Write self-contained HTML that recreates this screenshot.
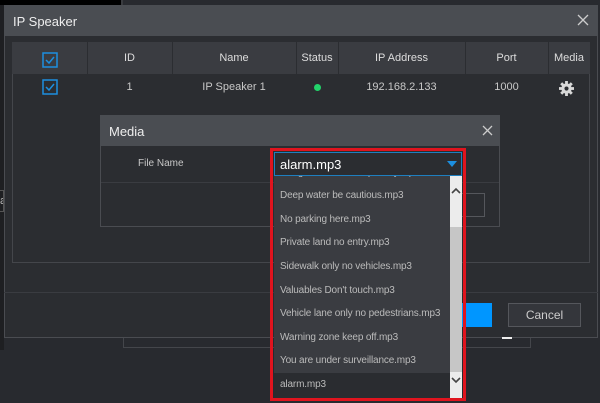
<!DOCTYPE html><html><head><style>
*{box-sizing:border-box;margin:0;padding:0}
body{width:600px;height:403px;background:#282a2f;font-family:"Liberation Sans",sans-serif;position:relative;overflow:hidden;color:#ccc}
.a{position:absolute}
.t{font-size:11px;color:#c8c8c8}
</style></head><body>
<div class="a" style="left:0;top:0;width:121px;height:5px;background:#000"></div>
<div class="a" style="left:121px;top:0;width:2px;height:5px;background:#3a3c40"></div>
<div class="a" style="left:0;top:5px;width:4px;height:345px;background:#1e1f22"></div>
<div class="a" style="left:0;top:190px;width:4px;height:22px;border:1px solid #555;border-left:none;font-size:11px;color:#bbb;overflow:hidden;line-height:20px">a</div>
<div class="a" style="left:4px;top:5px;width:594px;height:333px;background:#2b2d31;border:1px solid #4a4c51"></div>
<div class="a" style="left:4px;top:5px;width:594px;height:31px;background:#4a4d52;font-size:13px;color:#eee;padding:9px 0 0 9px">IP Speaker</div>
<svg class="a" style="left:577px;top:14px" width="12" height="12"><path d="M1 1l10 10M11 1L1 11" stroke="#ccc" stroke-width="1.3"/></svg>
<div class="a" style="left:12px;top:42px;width:578px;height:221px;border:1px solid #44464b"></div>
<div class="a" style="left:12px;top:42px;width:578px;height:32px;background:#3a3c41"></div>
<div class="a" style="left:87px;top:42px;width:1px;height:32px;background:#2b2d31"></div>
<div class="a" style="left:172px;top:42px;width:1px;height:32px;background:#2b2d31"></div>
<div class="a" style="left:296px;top:42px;width:1px;height:32px;background:#2b2d31"></div>
<div class="a" style="left:338px;top:42px;width:1px;height:32px;background:#2b2d31"></div>
<div class="a" style="left:465px;top:42px;width:1px;height:32px;background:#2b2d31"></div>
<div class="a" style="left:548px;top:42px;width:1px;height:32px;background:#2b2d31"></div>
<div class="a t" style="left:87px;top:52px;width:85px;text-align:center;color:#ddd">ID</div>
<div class="a t" style="left:172px;top:52px;width:124px;text-align:center;color:#ddd">Name</div>
<div class="a t" style="left:296px;top:52px;width:42px;text-align:center;color:#ddd">Status</div>
<div class="a t" style="left:338px;top:52px;width:127px;text-align:center;color:#ddd">IP Address</div>
<div class="a t" style="left:465px;top:52px;width:83px;text-align:center;color:#ddd">Port</div>
<div class="a t" style="left:548px;top:52px;width:42px;text-align:center;color:#ddd">Media</div>
<svg class="a" style="left:42px;top:52px" width="16" height="16"><rect x="1" y="1" width="14" height="14" fill="none" stroke="#1c8fe0" stroke-width="1.5"/><path d="M4 8l3 3 5-6" stroke="#1c8fe0" fill="none" stroke-width="1.5"/></svg>
<svg class="a" style="left:42px;top:79px" width="16" height="16"><rect x="1" y="1" width="14" height="14" fill="none" stroke="#1c8fe0" stroke-width="1.5"/><path d="M4 8l3 3 5-6" stroke="#1c8fe0" fill="none" stroke-width="1.5"/></svg>
<div class="a t" style="left:87px;top:81px;width:85px;text-align:center">1</div>
<div class="a t" style="left:172px;top:81px;width:124px;text-align:center">IP Speaker 1</div>
<div class="a" style="left:314px;top:84px;width:7px;height:7px;border-radius:50%;background:#22d36a"></div>
<div class="a t" style="left:338px;top:81px;width:127px;text-align:center">192.168.2.133</div>
<div class="a t" style="left:465px;top:81px;width:83px;text-align:center">1000</div>
<svg class="a" style="left:559px;top:81px" width="15" height="15" viewBox="0 0 16 16"><g fill="#d8d8d8"><circle cx="8" cy="8" r="5.5"/><rect x="6.5" y="0" width="3" height="16"/><rect x="0" y="6.5" width="16" height="3"/><rect x="6.5" y="0" width="3" height="16" transform="rotate(45 8 8)"/><rect x="6.5" y="0" width="3" height="16" transform="rotate(-45 8 8)"/></g><circle cx="8" cy="8" r="2.2" fill="#2b2d31"/></svg>
<div class="a" style="left:4px;top:292px;width:594px;height:1px;background:#3a3c41"></div>
<div class="a" style="left:440px;top:303px;width:52px;height:24px;background:#0096ff"></div>
<div class="a" style="left:508px;top:303px;width:73px;height:24px;border:1px solid #55575c;background:#34363b;font-size:12px;color:#ccc;text-align:center;line-height:22px">Cancel</div>
<div class="a" style="left:123px;top:338px;width:408px;height:10px;border:1px solid #44464b;border-top:none"></div>
<div class="a" style="left:502px;top:337px;width:10px;height:2px;background:#eee"></div>
<div class="a" style="left:100px;top:115px;width:400px;height:112px;background:#2b2d31;border:1px solid #4a4c51"></div>
<div class="a" style="left:100px;top:115px;width:400px;height:31px;background:#4a4d52;font-size:13px;color:#eee;padding:9px 0 0 9px">Media</div>
<svg class="a" style="left:482px;top:125px" width="11" height="11"><path d="M1 1l9 9M10 1L1 10" stroke="#ccc" stroke-width="1.3"/></svg>
<div class="a" style="left:101px;top:182px;width:398px;height:1px;background:#3a3c41"></div>
<div class="a t" style="left:138px;top:158px;font-size:10px">File Name</div>
<div class="a" style="left:462px;top:193px;width:23px;height:24px;border:1px solid #55575c;border-left:none"></div>
<div class="a" style="left:274px;top:152px;width:188px;height:24px;background:#2b2d31;border:1px solid #1e7fc0;font-size:13px;color:#fff;padding:4px 0 0 5px">alarm.mp3</div>
<svg class="a" style="left:447px;top:161px" width="10" height="6"><path d="M0 0h10L5 6z" fill="#1c8fe0"/></svg>
<div class="a" style="left:274px;top:176px;width:176px;height:222px;background:#3a3c41;overflow:hidden;font-size:10px;color:#bbb;letter-spacing:-0.15px">
<div style="position:absolute;left:6px;top:-9px">Dangerous area keep away.mp3</div>
<div style="position:absolute;left:6px;top:14px">Deep water be cautious.mp3</div>
<div style="position:absolute;left:6px;top:38px">No parking here.mp3</div>
<div style="position:absolute;left:6px;top:61px">Private land no entry.mp3</div>
<div style="position:absolute;left:6px;top:85px">Sidewalk only no vehicles.mp3</div>
<div style="position:absolute;left:6px;top:109px">Valuables Don't touch.mp3</div>
<div style="position:absolute;left:6px;top:132px">Vehicle lane only no pedestrians.mp3</div>
<div style="position:absolute;left:6px;top:156px">Warning zone keep off.mp3</div>
<div style="position:absolute;left:6px;top:179px">You are under surveillance.mp3</div>
<div style="position:absolute;left:0;top:197px;width:176px;height:25px;background:#2a2c30;padding:6px 0 0 6px">alarm.mp3</div>
</div>
<div class="a" style="left:450px;top:176px;width:12px;height:222px;background:#ececec"></div>
<div class="a" style="left:450px;top:227px;width:12px;height:145px;background:#c6c6c6"></div>
<svg class="a" style="left:451px;top:187px" width="10" height="7"><path d="M1 6l4-4 4 4" stroke="#444" stroke-width="1.6" fill="none"/></svg>
<svg class="a" style="left:451px;top:377px" width="10" height="7"><path d="M1 1l4 4 4-4" stroke="#444" stroke-width="1.6" fill="none"/></svg>
<div class="a" style="left:270px;top:148px;width:196px;height:253px;border:3px solid #e0141e"></div>
</body></html>
